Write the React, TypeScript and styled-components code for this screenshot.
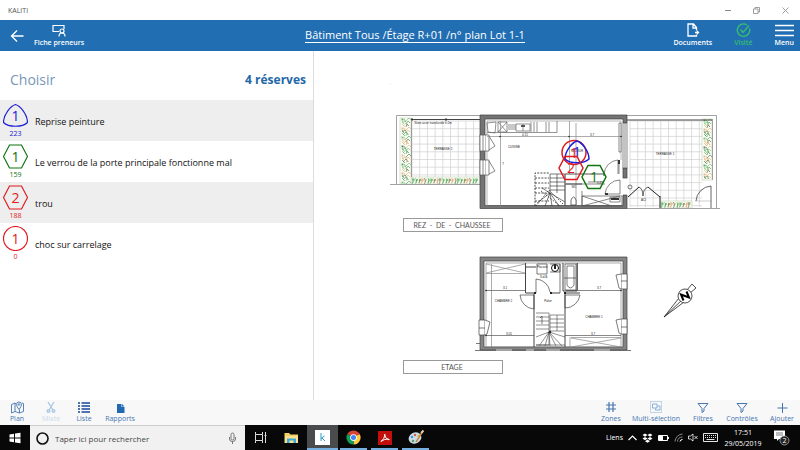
import React from 'react';
import styled, { createGlobalStyle } from 'styled-components';

const GlobalStyle = createGlobalStyle`
  * { box-sizing: border-box; }
  body { margin: 0; background: #fff; font-family: "Open Sans", "Noto Sans", sans-serif; }
  button, input { font: inherit; color: inherit; border: 0; padding: 0; margin: 0; background: none; }
  button { cursor: pointer; }
  svg { display: block; flex: none; }
`;

const Screen = styled.div`
  display: flex;
  flex-direction: column;
  height: 100vh;
  overflow: hidden;
`;

const TitleBar = styled.div`
  display: flex;
  align-items: center;
  justify-content: space-between;
  height: 20px;
  padding-left: 8px;
  font-size: 7px;
  color: #555;
`;

const WindowControls = styled.div`
  display: flex;
`;

const WindowButton = styled.button`
  display: flex;
  align-items: center;
  justify-content: center;
  width: 29px;
  height: 20px;
`;

const Header = styled.header`
  display: grid;
  grid-template-columns: 1fr auto 1fr;
  align-items: center;
  height: 31px;
  padding: 0 6px 0 8px;
  background: #226eb3;
  color: #fff;
`;

const HeaderGroup = styled.div<{ $end?: boolean }>`
  display: flex;
  align-items: center;
  justify-content: ${p => (p.$end ? 'flex-end' : 'flex-start')};
  gap: ${p => (p.$end ? 22 : 8)}px;
`;

const HeaderButton = styled.button<{ $done?: boolean }>`
  display: flex;
  flex-direction: column;
  align-items: center;
  gap: 1px;
  min-width: 18px;
  font-size: 7px;
  line-height: 10px;
  font-weight: 600;
  white-space: nowrap;
  color: ${p => (p.$done ? '#35bd6e' : '#fff')};
`;

const Breadcrumb = styled.a`
  margin-left: 28px;
  font-size: 11px;
  line-height: 14px;
  color: #fff;
  text-decoration: none;
  border-bottom: 1px solid #fff;
`;

const Main = styled.main`
  display: flex;
  flex: 1;
  min-height: 0;
`;

const Sidebar = styled.aside`
  flex: 0 0 314px;
  border-right: 1px solid #dcdcdc;
`;

const SidebarHead = styled.div`
  display: flex;
  align-items: center;
  justify-content: space-between;
  height: 49px;
  padding: 8px 7px 0 10px;
`;

const Heading = styled.h1`
  margin: 0;
  font-size: 14px;
  font-weight: 400;
  color: #7896b8;
`;

const Count = styled.strong`
  font-size: 12px;
  font-weight: 700;
  color: #2468a8;
`;

const List = styled.ul`
  list-style: none;
  margin: 0;
  padding: 0;
`;

const Item = styled.li`
  &:nth-child(odd) { background: #eee; }
`;

const ItemButton = styled.button`
  display: flex;
  align-items: center;
  gap: 7px;
  width: 100%;
  height: 41px;
  padding: 1px 0 0 3px;
  font-size: 9px;
  color: #111;
  text-align: left;
`;

const Badge = styled.span<{ $color: string }>`
  display: flex;
  flex-direction: column;
  align-items: center;
  gap: 1px;
  width: 25px;
  font-size: 7px;
  line-height: 10px;
  color: ${p => p.$color};
`;

const PlanArea = styled.section`
  flex: 1;
  min-width: 0;

  > svg { width: 100%; height: 100%; }
`;

const Toolbar = styled.nav`
  display: flex;
  justify-content: space-between;
  height: 25px;
  padding: 0 6px 1px 8px;
  background: #f8f8f8;
`;

const ToolGroup = styled.div<{ $wide?: boolean }>`
  display: flex;
  gap: ${p => (p.$wide ? 14 : 16)}px;
`;

const Tool = styled.button<{ $w: number }>`
  display: flex;
  flex-direction: column;
  align-items: center;
  justify-content: flex-end;
  width: ${p => p.$w}px;
  font-size: 7px;
  line-height: 10px;
  white-space: nowrap;
  color: #4676b0;

  &:disabled { color: #ccd9e8; }
`;

const Taskbar = styled.footer`
  display: flex;
  height: 25px;
  background: #080808;
  color: #fff;
`;

const StartButton = styled.button`
  display: flex;
  align-items: center;
  justify-content: center;
  width: 30px;
`;

const Search = styled.label`
  display: flex;
  align-items: center;
  gap: 6px;
  width: 215px;
  padding: 0 8px 0 6px;
  background: #f1f1f1;
  border-top: 1px solid #ccc;
`;

const SearchInput = styled.input`
  flex: 1;
  min-width: 0;
  font-size: 8px;
  outline: 0;

  &::placeholder { color: #444; opacity: 1; }
`;

const TaskButton = styled.button<{ $state?: 'open' | 'active' }>`
  display: flex;
  align-items: center;
  justify-content: center;
  width: ${p => (p.$state === 'open' ? 27 : 31)}px;
  margin: 0 ${p => (p.$state === 'open' ? 2 : 0)}px;
  background: ${p => (p.$state === 'active' ? '#4a4b4d' : 'transparent')};
  border-top: 2px solid transparent;
  border-bottom: 2px solid ${p => (p.$state ? '#76b0e0' : 'transparent')};
`;

const Tray = styled.div`
  display: flex;
  align-items: center;
  margin-left: auto;
  gap: 5px;
  padding-right: 10px;
  font-size: 7px;
`;

const Clock = styled.time`
  width: 40px;
  margin-right: 5px;
  font-size: 7px;
  line-height: 11px;
  text-align: center;
  white-space: nowrap;
`;

type Shape = 'shield' | 'hexagon' | 'circle';

const shapePath: Record<Shape, string> = {
  shield: 'M0 -11 C5 -9.5 12 -1 12 7 C7 12 -7 12 -12 7 C-12 -1 -5 -9.5 0 -11Z',
  hexagon: 'M-6 -11.5H6L12 0L6 11.5H-6L-12 0Z',
  circle: 'M-12 0A12 12 0 1 1 12 0A12 12 0 1 1 -12 0Z',
};

const MarkText = styled.text`
  font-family: "Open Sans", sans-serif;
  font-weight: 400;
  font-size: 14px;
  text-anchor: middle;
`;

function Mark({ shape, value, color, thick }: { shape: Shape; value: string; color: string; thick?: boolean }) {
  return (
    <>
      <path d={shapePath[shape]} fill="none" stroke={color} strokeWidth={thick ? 1.5 : 1.2} />
      <MarkText y="5" fill={color}>{value}</MarkText>
    </>
  );
}

const BLUE = '#2020d8';
const GREEN = '#107510';
const RED = '#e01b20';

const reserves: { id: string; label: string; shape: Shape; value: string; color: string }[] = [
  { id: '223', label: 'Reprise peinture', shape: 'shield', value: '1', color: BLUE },
  { id: '159', label: 'Le verrou de la porte principale fonctionne mal', shape: 'hexagon', value: '1', color: GREEN },
  { id: '188', label: 'trou', shape: 'hexagon', value: '2', color: RED },
  { id: '0', label: 'choc sur carrelage', shape: 'circle', value: '1', color: RED },
];

const Tiny = styled.text`
  font-family: "Liberation Sans", sans-serif;
  font-size: 3px;
  fill: #222;
  text-anchor: middle;
`;

const PlanTitle = styled.text`
  font-family: Lato, sans-serif;
  font-size: 7px;
  fill: #555;
  text-anchor: middle;
  white-space: pre;
`;

function Hedge({ x, y, w, h }: { x: number; y: number; w: number; h: number }) {
  const vertical = h > w;
  const count = Math.floor((vertical ? h : w) / 3);
  const colors = ['#3f9a4a', '#e0ab72', '#6dbb74', '#3c6e44', '#e3b68a'];
  return (
    <g fill="none">
      <rect x={x} y={y} width={w} height={h} fill="#fbfcf6" stroke="#b7c9a8" strokeWidth="0.5" />
      {Array.from({ length: count }, (_, i) => {
        const a = i * 3;
        const k = (i * 7) % 3;
        const d = vertical
          ? `M${x + 1 + k} ${y + a + 2}l3 -${1 + k}l2 3M${x + 2} ${y + a}l${1 + k} 3`
          : `M${x + a + k / 2} ${y + 1}l1 3l-1 3M${x + a + 2} ${y + 1 + k}l-1 3`;
        return (
          <g key={i} strokeWidth="0.6">
            <path d={d} stroke={colors[(i * 2) % 5]} />
            <path
              d={vertical ? `M${x + w - 5} ${y + a + 3}l${3 - k} -3l2 2` : `M${x + a + 1} ${y + 6}l1 -4l1 2`}
              stroke={colors[(i * 3 + 2) % 5]}
            />
          </g>
        );
      })}
    </g>
  );
}

function Tiles({ x, y, w, h }: { x: number; y: number; w: number; h: number }) {
  let d = '';
  for (let i = 0; i <= w; i += 7.7) d += `M${x + i} ${y}v${h}`;
  for (let j = 0; j <= h; j += 7.7) d += `M${x} ${y + j}h${w}`;
  return <path d={d} stroke="#d0d0d0" strokeWidth="0.7" fill="none" />;
}

function FloorPlan() {
  return (
    <svg viewBox="314 51 486 349" role="img" aria-label="Plan du lot 1-1">
      <circle cx="390.500" cy="84" r="0.6" fill="#ddd" />

      <Tiles x={412} y={121} w={68} h={56} />
      <Tiles x={630} y={121} w={72} h={86} />
      <Hedge x={400} y={118} w={11} h={66} />
      <Hedge x={412} y={177} w={68} h={7} />
      <Hedge x={702} y={119} w={10} h={61} />
      <Hedge x={661} y={201} w={31} h={7} />
      <path
        d="M396.500 184V115.500H480M390 184.500H480M411.500 121V177M627 115.500H716.500V208M627 208.500H720M712.500 119V180"
        fill="none" stroke="#8a8a8a" strokeWidth="0.8"
      />
      <path d="M411 119.500H480M627 120H712" stroke="#444" strokeWidth="1.2" />
      <g fill="#333">
        <rect x="411" y="118.500" width="2" height="2" />
        <rect x="445" y="118.500" width="2" height="2" />
      </g>
      <Tiny x="433" y="123.500">Store acier translucide h:2m</Tiny>
      <Tiny x="443" y="150">TERRASSE 2</Tiny>
      <Tiny x="665" y="155">TERRASSE 1</Tiny>

      <g fill="#747474" stroke="#3f3f3f" strokeWidth="0.7">
        <path d="M480 115H627V123H623V119H485V205.500H623V195H627V208.500H480Z" />
        <rect x="623" y="168" width="4" height="10" />
      </g>
      <path d="M487 206V121H621V160" fill="none" stroke="#888" strokeWidth="0.6" />

      <g fill="#fff" stroke="#555" strokeWidth="0.7">
        <rect x="480" y="135" width="6" height="16" />
        <rect x="480" y="160" width="6" height="15" />
        <rect x="623" y="123" width="4" height="45" />
        <path d="M483 135V151M483 160V175M625 123V168M619 123V152H621V123Z" />
        <path d="M486 135H489V151H486M489 136L495 146L489 150M486 160H489V175H486M489 161L495 171L489 174" />
      </g>

      <g fill="none" stroke="#666" strokeWidth="0.7">
        <path d="M487 132.500H557V121M487 123L496 122L495 133L488 132ZM498 122H507V132H498ZM498 122L507 132M507 122L498 132" />
        <path d="M508 125H516M508 127H516M508 129H516M516 124H530V131H516ZM523 124V131M531 122V132M534 122V132M537 122V132M546 122V132M549 122V132" />
        <path d="M487 136.500H622M500.500 121V206M569.500 121V174M576 123V205" stroke="#888" />
      </g>
      <rect x="521" y="125" width="4" height="2" fill="#555" />
      <g fill="#222">
        <circle cx="500" cy="136.500" r="0.8" />
        <circle cx="569" cy="136.500" r="0.8" />
        <circle cx="621" cy="136.500" r="0.8" />
      </g>
      <Tiny x="514" y="148">CUISINE</Tiny>
      <Tiny x="525" y="135.500">4.15</Tiny>
      <Tiny x="592" y="135.500">3.7</Tiny>
      <Tiny x="503" y="165">7</Tiny>
      <Tiny x="577" y="152">SEJOUR</Tiny>

      <g fill="none" stroke="#222" strokeWidth="0.8">
        <path d="M535 206V173H549M535 178H549M535 183H549M535 188H549M535 193H549M535 201H549" strokeDasharray="2 1.200" />
        <path d="M550 174H565M550 178H565M550 182H565M550 186H565M550 190H565M550 174V193M557 174V193M550 193L542 188M550 193L537 203M550 193L545 206M550 193L552 206M550 193L559 206M550 193L565 202" strokeWidth="0.6" />
        <path d="M565 174V206M565 174H604M604 173V176M565 184H582" strokeWidth="1.200" stroke="#555" />
        <path d="M536 206L549 190L563 204M541 191L560 206" strokeDasharray="1.500 1.500" />
      </g>
      <g fill="none" stroke="#555" strokeWidth="0.7">
        <path d="M604 174A15 15 0 0 1 618 160V174M619 162V174M605 194A15 15 0 0 1 620 180M605 194H620V180M566 184H605M588 182H604" />
        <path d="M582 191V206M582 196H622V206H582ZM582 196L612 206M582 206L620 196M610 197H620V202H610Z" />
        <path d="M571 205V200Q573.500 194 576 200V205Z" fill="#fff" stroke="#333" />
      </g>
      <path d="M611 198H619V200H611ZM618 160H620V164H618ZM605 193H608V195H605Z" fill="#333" />
      <Tiny x="574" y="188">WC</Tiny>
      <Tiny x="600" y="184">1.21</Tiny>

      <g fill="none" stroke="#222" strokeWidth="1">
        <path d="M628 197L639 187M660 197L648 187M660 196V208" />
        <path d="M639 187Q643 189 643 196Q643 189 648 187M696 201A16 16 0 0 1 711 186V208" strokeWidth="0.7" />
        <circle cx="630" cy="187" r="2" strokeWidth="0.6" />
        <path d="M695 201H712" strokeWidth="0.5" stroke="#999" />
      </g>
      <Tiny x="643.500" y="201">ACI</Tiny>

      <rect x="403.500" y="218.500" width="99" height="13" fill="#fff" stroke="#999" />
      <PlanTitle x="452" y="227.500">{'REZ\u00a0\u00a0-\u00a0\u00a0DE\u00a0\u00a0-\u00a0\u00a0CHAUSSEE'}</PlanTitle>

      <path
        fillRule="evenodd" d="M480 257H627V350H480ZM484 261V347H623V261Z"
        fill="#858585" stroke="#3f3f3f" strokeWidth="0.7"
      />
      <path d="M475 350.500H631M476 343.500H480" stroke="#555" strokeWidth="0.8" />
      <path d="M496 350H512M526 350H534M546 350H560M594 350H610" stroke="#ddd" />
      <g fill="none" stroke="#888" strokeWidth="0.7">
        <path d="M486 263H621V347H486Z" />
        <path d="M486 273.500H525M486 264L525 273M486 273L525 264M491.500 264V347" />
        <path d="M486 290.500H526M486 335.500H534M565 335.500H621M566 290.500H621M577.500 263V290" stroke="#555" />
        <path d="M570 337V348M571 337.500H621M571 338L621 347M571 347L621 338" />
      </g>
      <g fill="none" stroke="#444" strokeWidth="1">
        <path d="M525.500 263V293H536M526 267H536M550 293H560M565 293H580M534 294V347M565 294V347M563 263V291H577V263" />
        <path d="M537 264H547V274H537ZM550 264H560V272H550M560 264V293M565 264H576V290H565ZM567 266H574V285Q570.500 291 567 285ZM564 278H576" strokeWidth="0.7" />
        <circle cx="555" cy="268" r="3.500" stroke="#111" />
        <path d="M536 293V279A15 15 0 0 1 550 292M520 295H534V309A15 15 0 0 1 520 295M580 295H565V308A15 15 0 0 0 580 295" strokeWidth="0.7" />
        <path d="M536 313H549V345H536M536 317H549M536 321H549M536 325H549M536 329H549M550 315H564M550 319H564M550 323H564M550 327H564M550 331H564M550 315V331M557 315V331M549 332L536 337M549 332L539 346M549 332L545 346M549 332L550 346M549 332L556 346M549 332L562 346M549 332L565 337M536 345H565" strokeWidth="0.6" />
        <path d="M542 324V316L540 318" strokeWidth="0.7" />
      </g>
      <g fill="#222">
        <rect x="534" y="292" width="2" height="2" /><rect x="550" y="292" width="2" height="2" />
        <rect x="564" y="292" width="2" height="2" /><rect x="554" y="265" width="2" height="4" />
        <circle cx="486" cy="290.500" r="0.8" /><circle cx="621" cy="290.500" r="0.8" />
        <circle cx="486" cy="335.500" r="0.8" /><circle cx="550" cy="332" r="1.200" />
      </g>
      <g fill="#fff" stroke="#444" strokeWidth="0.7">
        <path d="M621 274H627V289H621ZM621 319H627V334H621ZM479 320H485V335H479ZM621 281H627M621 327H627M479 328H485" />
        <path d="M621 274L616 275L619 288L621 289M621 319L616 320L619 333L621 334M485 320L490 322L487 334L485 335" />
      </g>
      <Tiny x="503.500" y="302">CHAMBRE 2</Tiny>
      <Tiny x="594" y="318">CHAMBRE 1</Tiny>
      <Tiny x="548" y="302">Palier</Tiny>
      <Tiny x="544" y="278">S.d.B.</Tiny>
      <Tiny x="542" y="268">Placard</Tiny>
      <Tiny x="505" y="289">3.1</Tiny>
      <Tiny x="599" y="289">3.7</Tiny>
      <Tiny x="509" y="334.500">3.05</Tiny>
      <Tiny x="593" y="334.500">3.7</Tiny>
      <rect x="403.500" y="360.500" width="99" height="13" fill="#fff" stroke="#999" />
      <PlanTitle x="452" y="369.500">ETAGE</PlanTitle>

      <g stroke="#222" strokeWidth="0.8" fill="#fff">
        <path d="M664 317L679 298L684 302Z" />
        <path d="M664 317L682 300" />
        <path d="M687 290L692 284L696 288L690 293Z" />
        <circle cx="685" cy="296" r="7" />
        <path d="M683.500 300.500L681 294.500L689 297.500L686.500 291.500" fill="none" stroke="#000" strokeWidth="2" />
      </g>

      <g transform="translate(574 152.500)"><Mark shape="circle" value="1" color={RED} thick /></g>
      <g transform="translate(577 152)"><Mark shape="shield" value="1" color={BLUE} thick /></g>
      <g transform="translate(571 168)"><Mark shape="hexagon" value="2" color={RED} thick /></g>
      <g transform="translate(594 177)"><Mark shape="hexagon" value="1" color={GREEN} thick /></g>
    </svg>
  );
}

const line = { fill: 'none', stroke: 'currentColor' } as const;

const BackIcon = () => (
  <svg width="14" height="14" {...line} strokeWidth="1.3"><path d="M13.500 7H1.500M7 1.500L1.500 7L7 12.500" /></svg>
);
const PersonIcon = () => (
  <svg width="14" height="13" {...line} strokeWidth="1.2">
    <path d="M7 7.500H1V1.500H12V5" /><circle cx="10" cy="7" r="2" /><path d="M7 12.500Q7 9 10 9Q13 9 13 12.500" />
  </svg>
);
const DocumentIcon = () => (
  <svg width="14" height="14" {...line} strokeWidth="1.3">
    <path d="M10.500 7.500V4.500L7.500 1H2V13H10.500V11.500M7 1V5H10.500M9 9.500H12.500M11 8L12.500 9.500L11 11" />
  </svg>
);
const CheckIcon = () => (
  <svg width="15" height="14" {...line} strokeWidth="1.4">
    <path d="M13.500 5.500A6.200 6.200 0 1 1 11 2M4.500 6.500L7 9.500L13 2.500" />
  </svg>
);
const MenuIcon = () => (
  <svg width="19" height="13" {...line} strokeWidth="1.3"><path d="M0 1.500H19M0 6.500H19M0 11.500H19" /></svg>
);
const MapIcon = () => (
  <svg width="13" height="13" {...line} strokeWidth="0.9">
    <path d="M5 3L4 2L0.500 3.500V12L4 10.500L8.500 12L12.500 10.500V2.500L11 2M4 2V10.500M8.500 8.500V12M8 8.500Q5.500 5.500 5.500 3.500A2.500 2.500 0 0 1 10.500 3.500Q10.500 5.500 8 8.500Z" /><circle cx="8" cy="3.500" r="0.8" />
  </svg>
);
const CutIcon = () => (
  <svg width="10" height="13" fill="none" stroke="#a9c9e6" strokeWidth="1.4">
    <path d="M2 1L7 9M8 1L3 9" /><circle cx="2.500" cy="10" r="1.300" /><circle cx="7.500" cy="10" r="1.300" />
  </svg>
);
const ListIcon = () => (
  <svg width="12" height="13" fill="none" stroke="#16469b" strokeWidth="1.6">
    <path d="M0 2H2M0 5H2M0 8H2M0 11H2M3.500 2H12M3.500 5H12M3.500 8H12M3.500 11H12" />
  </svg>
);
const ReportIcon = () => (
  <svg width="9" height="11" fill="#2169b2"><path d="M1 1H5.500V4H8.500V10H1ZM6 1L8.500 3.500H6Z" /></svg>
);
const HashIcon = () => (
  <svg width="12" height="13" {...line} strokeWidth="1.2"><path d="M4 1V11M8 1V11M1 4H11M1 8H11" /></svg>
);
const MultiIcon = () => (
  <svg width="12" height="13" fill="none" stroke="#7fa8d4" strokeWidth="0.9">
    <path d="M0.500 0.500H11.500V11.500H0.500Z" strokeDasharray="1 1" /><path d="M2.500 3H7V7H2.500ZM7.500 5H10V9H5.500V7.500" />
  </svg>
);
const FilterIcon = () => (
  <svg width="12" height="12" {...line} strokeWidth="1"><path d="M1 1.500H11L7 6.500V9L5 10.500V6.500Z" /></svg>
);
const PlusIcon = () => (
  <svg width="11" height="12" {...line} strokeWidth="1"><path d="M5.500 1V11M0.500 6H10.500" /></svg>
);

const WindowsIcon = () => (
  <svg width="12" height="12" fill="#fff"><path d="M0.500 2.500L5 1.800V5.500H0.500ZM6 1.600L11.500 0.800V5.500H6ZM0.500 6.500H5V10.200L0.500 9.500ZM6 6.500H11.500V11.200L6 10.400Z" /></svg>
);
const CortanaIcon = () => (
  <svg width="13" height="13"><circle cx="6.500" cy="6.500" r="5.500" fill="none" stroke="#111" strokeWidth="1.600" /></svg>
);
const MicIcon = () => (
  <svg width="9" height="12" fill="none" stroke="#777"><rect x="3" y="1" width="3" height="7" rx="1.500" /><path d="M1.500 5V7Q1.500 9.500 4.500 9.500Q7.500 9.500 7.500 7V5M4.500 9.500V12" /></svg>
);
const TaskViewIcon = () => (
  <svg width="13" height="11" fill="none" stroke="#ddd"><path d="M1.500 0V2.500H8.500V0M1.500 11V8.500H8.500V11M1.500 2.500V8.500M8.500 2.500V8.500M11.500 0V11M10.500 3.500H12.500" /></svg>
);
const FolderIcon = () => (
  <svg width="15" height="12"><path d="M0.500 1H5L6.500 2.500H14V11H0.500Z" fill="#f5cf62" /><path d="M1 4H14V11H1Z" fill="#fbe08e" /><path d="M3 11V6.500H12V11H9.500V8.500H5.500V11Z" fill="#39a9dc" /></svg>
);
const KalitiIcon = () => (
  <svg width="15" height="15"><rect width="15" height="15" fill="#fff" /><path d="M6 3V11M6 8.500L9.500 6M7 8L10 11" stroke="#2f9bc8" fill="none" /></svg>
);
const ChromeIcon = () => (
  <svg width="15" height="15" viewBox="0 0 16 16">
    <path d="M8 8L1.500 4.200A7.500 7.500 0 0 1 14.500 4.200Z" fill="#db4437" />
    <path d="M8 8L14.500 4.200A7.500 7.500 0 0 1 8 15.500Z" fill="#ffcd40" />
    <path d="M8 8V15.500A7.500 7.500 0 0 1 1.500 4.200Z" fill="#0f9d58" />
    <path d="M8 4.300H14.500" stroke="#db4437" /><circle cx="8" cy="8" r="3.600" fill="#fff" /><circle cx="8" cy="8" r="2.700" fill="#4285f4" />
  </svg>
);
const AcrobatIcon = () => (
  <svg width="14" height="14"><rect width="14" height="14" fill="#c20f0c" /><path d="M3 10.500Q6.500 8 7 3.500Q7 2.500 6.500 3.500Q7 7.500 11 9Q12 8.500 10 8Q6 8 3 10.500Z" fill="none" stroke="#fff" /></svg>
);
const PaletteIcon = () => (
  <svg width="16" height="15">
    <ellipse cx="7" cy="8" rx="6.500" ry="5.500" fill="#c9dce8" transform="rotate(-25 7 8)" />
    <circle cx="4" cy="7" r="1.200" fill="#4c8fc4" /><circle cx="7" cy="5" r="1.200" fill="#d95446" /><circle cx="10.500" cy="6" r="1.200" fill="#e6b53b" /><circle cx="5" cy="11" r="1.200" fill="#52a05b" />
    <path d="M15 1L8 12" stroke="#c88945" strokeWidth="1.500" /><path d="M15.500 0.500L13 3" stroke="#e8c79c" strokeWidth="2" />
  </svg>
);
const ChevronIcon = () => (
  <svg width="9" height="8" {...line} strokeWidth="1.2"><path d="M0.500 6L4.500 2L8.500 6" /></svg>
);
const DropboxIcon = () => (
  <svg width="11" height="10" fill="#fff"><path d="M3 0.500L5.500 2L3 3.800L0.500 2ZM8 0.500L10.500 2L8 3.800L5.500 2ZM3 4L5.500 5.600L3 7.300L0.500 5.600ZM8 4L10.500 5.600L8 7.300L5.500 5.600ZM5.500 6.500L8 8.200L5.500 9.800L3 8.200Z" /></svg>
);
const BatteryIcon = () => (
  <svg width="11" height="8"><path d="M0.500 1.500H9.500V6.500H0.500ZM10.500 3V5" stroke="#fff" fill="none" /><rect x="1" y="2" width="4" height="4" fill="#fff" /></svg>
);
const WifiIcon = () => (
  <svg width="9" height="9" fill="none" stroke="#888"><path d="M1 8.500A8 8 0 0 1 8.500 1M3.500 8.500A5 5 0 0 1 8.500 4" /><path d="M6 8.500A2.500 2.500 0 0 1 8.500 6.500" stroke="#fff" /></svg>
);
const MuteIcon = () => (
  <svg width="10" height="9" {...line} strokeWidth="0.8"><path d="M0.500 3H2.500L5 1V8L2.500 6H0.500ZM6.500 3L9.500 6M9.500 3L6.500 6" /></svg>
);
const KeyboardIcon = () => (
  <svg width="15" height="9" {...line} strokeWidth="0.9"><path d="M0.500 0.500H14.500V8.500H0.500Z" /><path d="M2 2.500H13M2 4.500H13" strokeDasharray="1 1" /><path d="M3.500 6.500H11.500" /></svg>
);
const NoticeIcon = () => (
  <svg width="17" height="17">
    <path d="M1 1.500H12V10H6L4 12V10H1Z" fill="#fff" /><path d="M3 4H10M3 6H10" stroke="#444" strokeWidth="0.7" />
    <circle cx="11.500" cy="11.500" r="4.500" fill="#222" stroke="#aaa" strokeWidth="0.8" />
    <text x="11.500" y="14" fontSize="7" fill="#fff" textAnchor="middle">2</text>
  </svg>
);

export default function App() {
  return (
    <Screen>
      <GlobalStyle />
      <TitleBar>
        <span>KALITI</span>
        <WindowControls>
          <WindowButton aria-label="Réduire"><svg width="6" height="6" stroke="#888"><path d="M0 3.500H6" /></svg></WindowButton>
          <WindowButton aria-label="Restaurer"><svg width="7" height="7" fill="none" stroke="#888" strokeWidth="0.8"><path d="M0.500 2H5V6.500H0.500ZM2 2V0.500H6.500V5H5" /></svg></WindowButton>
          <WindowButton aria-label="Fermer"><svg width="7" height="7" stroke="#888" strokeWidth="0.8"><path d="M0.500 0.500L6.500 6.500M6.500 0.500L0.500 6.500" /></svg></WindowButton>
        </WindowControls>
      </TitleBar>

      <Header>
        <HeaderGroup>
          <HeaderButton aria-label="Retour"><BackIcon /></HeaderButton>
          <HeaderButton><PersonIcon />Fiche preneurs</HeaderButton>
        </HeaderGroup>
        <Breadcrumb href="#plan">Bâtiment Tous /Étage R+01 /n° plan Lot 1-1</Breadcrumb>
        <HeaderGroup $end>
          <HeaderButton><DocumentIcon />Documents</HeaderButton>
          <HeaderButton $done><CheckIcon />Visité</HeaderButton>
          <HeaderButton><MenuIcon />Menu</HeaderButton>
        </HeaderGroup>
      </Header>

      <Main>
        <Sidebar>
          <SidebarHead>
            <Heading>Choisir</Heading>
            <Count>4 réserves</Count>
          </SidebarHead>
          <List>
            {reserves.map(r => (
              <Item key={r.id}>
                <ItemButton>
                  <Badge $color={r.color}>
                    <svg width="25" height="25" viewBox="-12.500 -12.500 25 25"><Mark shape={r.shape} value={r.value} color={r.color} /></svg>
                    {r.id}
                  </Badge>
                  {r.label}
                </ItemButton>
              </Item>
            ))}
          </List>
        </Sidebar>
        <PlanArea><FloorPlan /></PlanArea>
      </Main>

      <Toolbar>
        <ToolGroup>
          <Tool $w={18}><MapIcon />Plan</Tool>
          <Tool $w={18} disabled><CutIcon />Mixte</Tool>
          <Tool $w={16}><ListIcon />Liste</Tool>
          <Tool $w={24}><ReportIcon />Rapports</Tool>
        </ToolGroup>
        <ToolGroup $wide>
          <Tool $w={18}><HashIcon />Zones</Tool>
          <Tool $w={44}><MultiIcon />Multi-sélection</Tool>
          <Tool $w={22}><FilterIcon />Filtres</Tool>
          <Tool $w={28}><FilterIcon />Contrôles</Tool>
          <Tool $w={24}><PlusIcon />Ajouter</Tool>
        </ToolGroup>
      </Toolbar>

      <Taskbar>
        <StartButton aria-label="Démarrer"><WindowsIcon /></StartButton>
        <Search>
          <CortanaIcon />
          <SearchInput placeholder="Taper ici pour rechercher" aria-label="Rechercher" />
          <MicIcon />
        </Search>
        <TaskButton aria-label="Vue des tâches"><TaskViewIcon /></TaskButton>
        <TaskButton aria-label="Explorateur"><FolderIcon /></TaskButton>
        <TaskButton aria-label="Kaliti" $state="active"><KalitiIcon /></TaskButton>
        <TaskButton aria-label="Chrome" $state="open"><ChromeIcon /></TaskButton>
        <TaskButton aria-label="Acrobat" $state="open"><AcrobatIcon /></TaskButton>
        <TaskButton aria-label="Paint" $state="open"><PaletteIcon /></TaskButton>
        <Tray>
          <span>Liens</span>
          <ChevronIcon /><DropboxIcon /><BatteryIcon /><WifiIcon /><MuteIcon /><KeyboardIcon />
          <Clock>17:51<br />29/05/2019</Clock>
          <NoticeIcon />
        </Tray>
      </Taskbar>
    </Screen>
  );
}
